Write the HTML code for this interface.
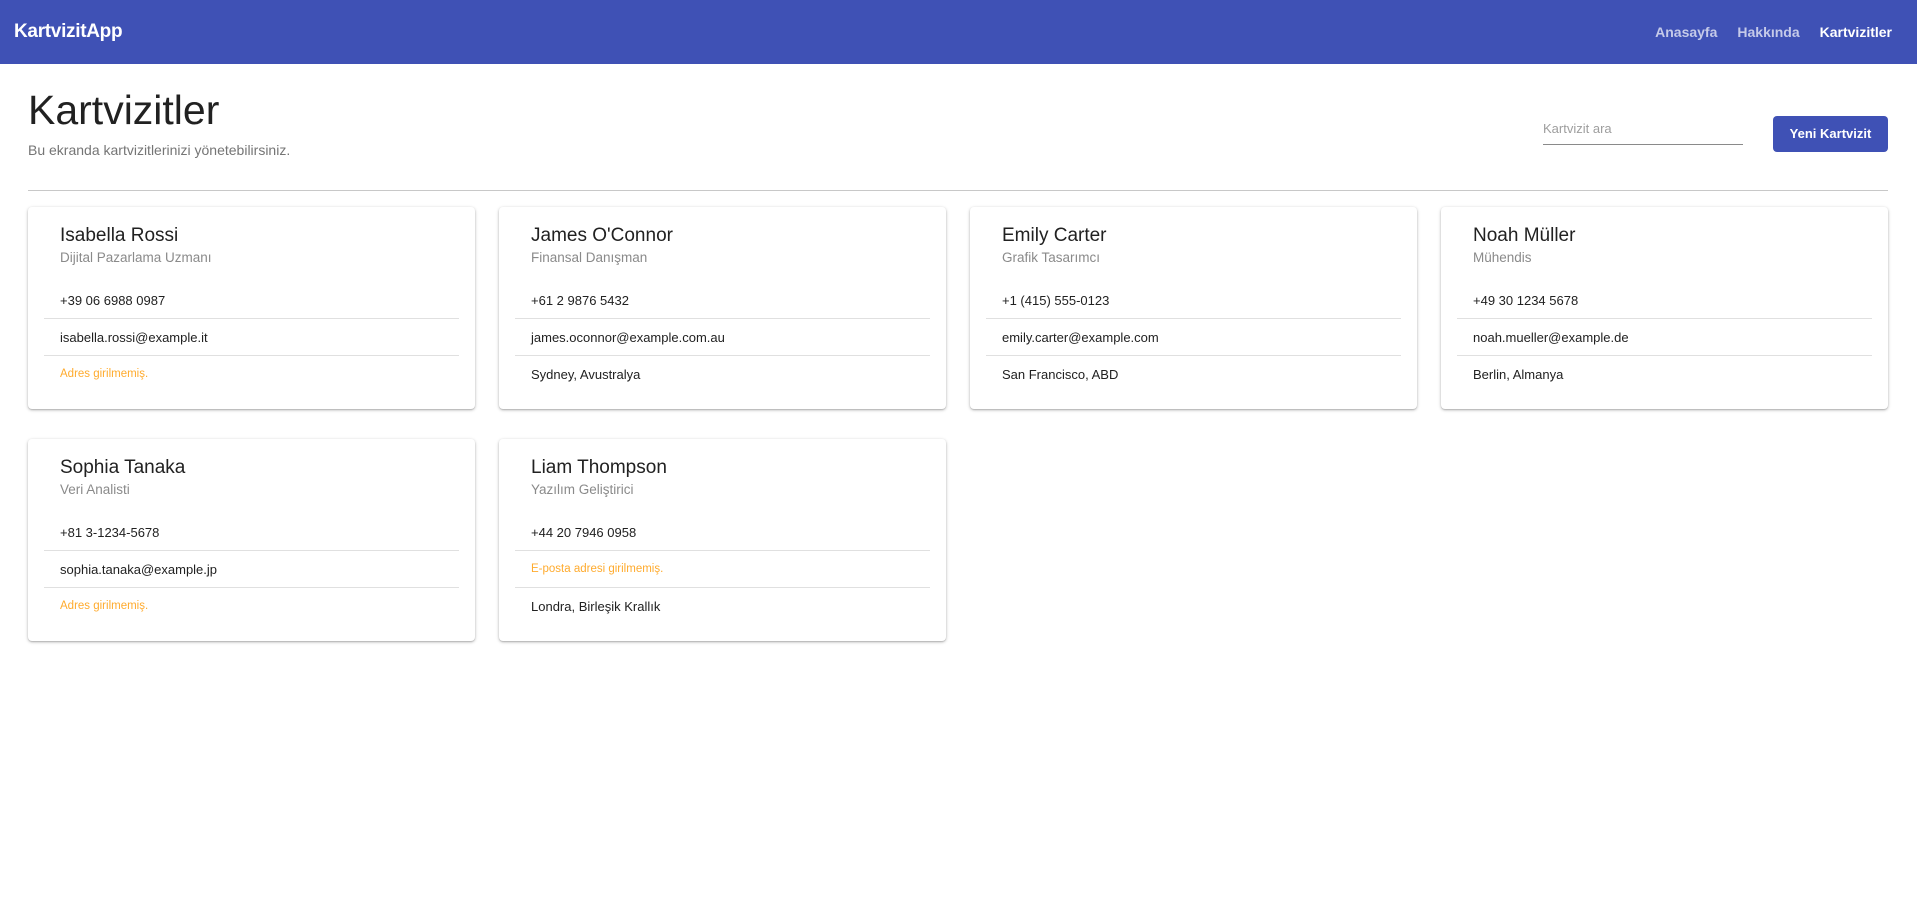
<!DOCTYPE html>
<html><head><meta charset="utf-8"><style>
*{box-sizing:border-box;margin:0;padding:0}
body{width:1917px;height:902px;background:#fff;font-family:"Liberation Sans",sans-serif;color:#212121;position:relative;overflow:hidden}
.nav{position:absolute;left:0;top:0;width:1917px;height:64px;background:#3f51b5}
.logo{position:absolute;left:14px;top:21px;font-size:19px;font-weight:bold;color:#fff;letter-spacing:-0.3px}
.links{position:absolute;right:25px;top:24px;font-size:14px;font-weight:bold;display:flex;gap:20px}
.links span{color:#c5cae9}.links span.a{color:#fff}
h1{position:absolute;left:28px;top:86px;font-size:41px;font-weight:normal;color:#212121;line-height:48px}
.sub{position:absolute;left:28px;top:142px;font-size:14px;color:#757575}
.search{position:absolute;left:1543px;top:119px;width:200px;height:26px;border-bottom:1px solid #8a8a8a;font-size:13px;color:#9e9e9e;padding-top:2px}
.btn{position:absolute;left:1773px;top:116px;width:115px;height:36px;background:#3f51b5;border-radius:4px;color:#fff;font-size:13px;font-weight:bold;text-align:center;line-height:36px}
.hr{position:absolute;left:28px;top:190px;width:1860px;height:1px;background:#c8c8c8}
.card{position:absolute;width:447px;height:202px;background:#fff;border-radius:4px;box-shadow:0 1px 3px rgba(0,0,0,.28),0 1px 1px rgba(0,0,0,.12)}
.name{position:absolute;left:32px;top:17px;font-size:19px;line-height:24px;color:#212121}
.role{position:absolute;left:32px;top:43px;font-size:13.5px;color:#8a8a8a}
.item{position:absolute;left:16px;width:415px;height:37px;font-size:13px;line-height:37px;padding-left:16px;color:#212121}
.i1{top:75px;border-bottom:1px solid #e0e0e0}
.i2{top:112px;border-bottom:1px solid #e0e0e0}
.i3{top:149px}
.w{color:#ffab2e;font-size:11.5px}
</style></head><body>
<div class="nav"><div class="logo">KartvizitApp</div>
<div class="links"><span>Anasayfa</span><span>Hakkında</span><span class="a">Kartvizitler</span></div></div>
<h1>Kartvizitler</h1>
<div class="sub">Bu ekranda kartvizitlerinizi yönetebilirsiniz.</div>
<div class="search">Kartvizit ara</div>
<div class="btn">Yeni Kartvizit</div>
<div class="hr"></div>

<div class="card" style="left:28px;top:207px"><div class="name">Isabella Rossi</div><div class="role">Dijital Pazarlama Uzmanı</div>
<div class="item i1">+39 06 6988 0987</div><div class="item i2">isabella.rossi@example.it</div><div class="item i3 w">Adres girilmemiş.</div></div>

<div class="card" style="left:499px;top:207px"><div class="name">James O'Connor</div><div class="role">Finansal Danışman</div>
<div class="item i1">+61 2 9876 5432</div><div class="item i2">james.oconnor@example.com.au</div><div class="item i3">Sydney, Avustralya</div></div>

<div class="card" style="left:970px;top:207px"><div class="name">Emily Carter</div><div class="role">Grafik Tasarımcı</div>
<div class="item i1">+1 (415) 555-0123</div><div class="item i2">emily.carter@example.com</div><div class="item i3">San Francisco, ABD</div></div>

<div class="card" style="left:1441px;top:207px"><div class="name">Noah Müller</div><div class="role">Mühendis</div>
<div class="item i1">+49 30 1234 5678</div><div class="item i2">noah.mueller@example.de</div><div class="item i3">Berlin, Almanya</div></div>

<div class="card" style="left:28px;top:439px"><div class="name">Sophia Tanaka</div><div class="role">Veri Analisti</div>
<div class="item i1">+81 3-1234-5678</div><div class="item i2">sophia.tanaka@example.jp</div><div class="item i3 w">Adres girilmemiş.</div></div>

<div class="card" style="left:499px;top:439px"><div class="name">Liam Thompson</div><div class="role">Yazılım Geliştirici</div>
<div class="item i1">+44 20 7946 0958</div><div class="item i2 w">E-posta adresi girilmemiş.</div><div class="item i3">Londra, Birleşik Krallık</div></div>
</body></html>
